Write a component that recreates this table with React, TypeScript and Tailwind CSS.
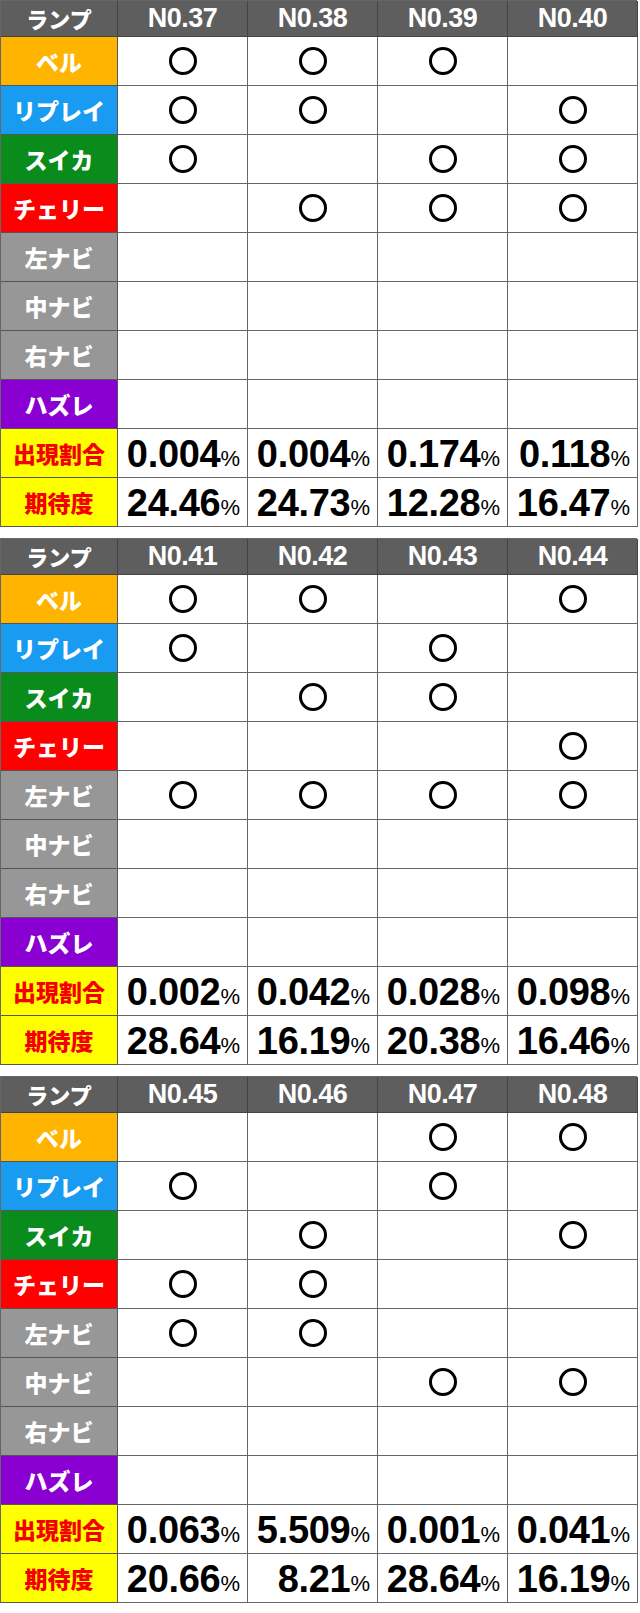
import React from 'react';

type Lamp = { label: string; bg: string };

const lamps: Lamp[] = [
  { label: 'ベル', bg: 'bg-[#ffb400]' },
  { label: 'リプレイ', bg: 'bg-[#1a9bf2]' },
  { label: 'スイカ', bg: 'bg-[#0a8c1c]' },
  { label: 'チェリー', bg: 'bg-[#ff0000]' },
  { label: '左ナビ', bg: 'bg-[#979797]' },
  { label: '中ナビ', bg: 'bg-[#979797]' },
  { label: '右ナビ', bg: 'bg-[#979797]' },
  { label: 'ハズレ', bg: 'bg-[#8a00d2]' },
];

type Table = {
  nos: string[];
  marks: number[][]; // 8 lamp rows x 4 cols
  rate: string[];
  expect: string[];
};

const tables: Table[] = [
  {
    nos: ['N0.37', 'N0.38', 'N0.39', 'N0.40'],
    marks: [
      [1, 1, 1, 0],
      [1, 1, 0, 1],
      [1, 0, 1, 1],
      [0, 1, 1, 1],
      [0, 0, 0, 0],
      [0, 0, 0, 0],
      [0, 0, 0, 0],
      [0, 0, 0, 0],
    ],
    rate: ['0.004', '0.004', '0.174', '0.118'],
    expect: ['24.46', '24.73', '12.28', '16.47'],
  },
  {
    nos: ['N0.41', 'N0.42', 'N0.43', 'N0.44'],
    marks: [
      [1, 1, 0, 1],
      [1, 0, 1, 0],
      [0, 1, 1, 0],
      [0, 0, 0, 1],
      [1, 1, 1, 1],
      [0, 0, 0, 0],
      [0, 0, 0, 0],
      [0, 0, 0, 0],
    ],
    rate: ['0.002', '0.042', '0.028', '0.098'],
    expect: ['28.64', '16.19', '20.38', '16.46'],
  },
  {
    nos: ['N0.45', 'N0.46', 'N0.47', 'N0.48'],
    marks: [
      [0, 0, 1, 1],
      [1, 0, 1, 0],
      [0, 1, 0, 1],
      [1, 1, 0, 0],
      [1, 1, 0, 0],
      [0, 0, 1, 1],
      [0, 0, 0, 0],
      [0, 0, 0, 0],
    ],
    rate: ['0.063', '5.509', '0.001', '0.041'],
    expect: ['20.66', '8.21', '28.64', '16.19'],
  },
];

const jp = "font-['Noto_Sans_CJK_JP',sans-serif]";
const num = "font-['Liberation_Sans',Arial,sans-serif]";

const Percent = ({ value }: { value: string }) => (
  <div className="flex h-[49px] items-center justify-end border-r border-b border-[#666] bg-white pr-[7px]">
    <span className={`${num} mt-[2px] text-[38px] font-bold leading-none tracking-[-0.3px] text-black`}>
      {value}
    </span>
    <span className={`${num} mt-[12px] text-[22px] leading-none text-black`}>%</span>
  </div>
);

const LampTable = ({ t }: { t: Table }) => (
  <div className="grid w-[637px] grid-cols-[117px_repeat(4,130px)] border-l border-t border-[#666]">
    {/* header */}
    <div className={`${jp} flex h-[36px] items-center justify-center border-r border-b border-[#444] bg-[#5e5e5e] text-[22px] font-black text-white`}>
      ランプ
    </div>
    {t.nos.map((n) => (
      <div
        key={n}
        className={`${num} flex h-[36px] items-center justify-center border-r border-b border-[#444] bg-[#5e5e5e] text-[27px] font-bold tracking-[-0.5px] text-white`}
      >
        {n}
      </div>
    ))}

    {lamps.map((l, i) => (
      <React.Fragment key={l.label}>
        <div
          className={`${jp} ${l.bg} flex h-[49px] items-center justify-center border-r border-b border-[#555] text-[23px] font-black text-white`}
        >
          {l.label}
        </div>
        {t.marks[i].map((m, j) => (
          <div key={j} className="flex h-[49px] items-center justify-center border-r border-b border-[#666] bg-white">
            {m === 1 && <div className="h-[28px] w-[28px] rounded-full border-[3px] border-black" />}
          </div>
        ))}
      </React.Fragment>
    ))}

    <div className={`${jp} flex h-[49px] items-center justify-center border-r border-b border-[#555] bg-[#ffff00] text-[23px] font-black text-[#f50000]`}>
      出現割合
    </div>
    {t.rate.map((v, j) => (
      <Percent key={j} value={v} />
    ))}

    <div className={`${jp} flex h-[49px] items-center justify-center border-r border-b border-[#555] bg-[#ffff00] text-[23px] font-black text-[#f50000]`}>
      期待度
    </div>
    {t.expect.map((v, j) => (
      <Percent key={j} value={v} />
    ))}
  </div>
);

export default function App() {
  return (
    <div className="flex w-[640px] flex-col gap-[11px] bg-white pb-[11px]">
      {tables.map((t) => (
        <LampTable key={t.nos[0]} t={t} />
      ))}
    </div>
  );
}
